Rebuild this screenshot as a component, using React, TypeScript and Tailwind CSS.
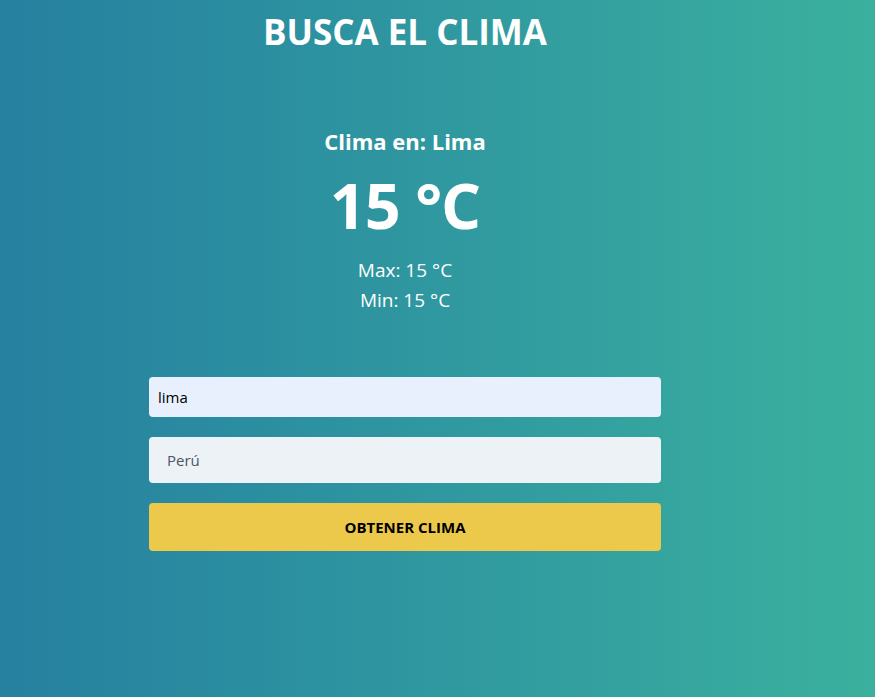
export default function App() {
  return (
    <div
      className="min-h-[697px] w-full bg-gradient-to-r from-[#2680a0] to-[#3bb09e] text-white"
      style={{ fontFamily: '"Open Sans", "Noto Sans", sans-serif' }}
    >
      <div className="ml-[149px] w-[512px] flex flex-col items-center">
        <h1 className="mt-[9px] text-[35px] leading-[46px] font-bold">BUSCA EL CLIMA</h1>

        <div className="mt-[71px] flex flex-col items-center">
          <h2 className="text-[22px] leading-[30px] font-bold">Clima en: Lima</h2>
          <p className="mt-[16px] text-[63px] leading-[66px] font-bold tracking-[-1px]">15 °C</p>
          <p className="mt-[17px] text-[19px] leading-[30px]">Max: 15 °C</p>
          <p className="text-[19px] leading-[30px]">Min: 15 °C</p>
        </div>

        <form className="mt-[62px] w-full flex flex-col">
          <input
            type="text"
            defaultValue="lima"
            className="h-[40px] w-full rounded bg-[#e8f0fe] px-[9px] text-[15px] text-black outline-none"
          />
          <input
            type="text"
            defaultValue="Perú"
            className="mt-[20px] h-[46px] w-full rounded bg-[#edf2f7] px-[18px] text-[15px] text-[#4a5568] outline-none"
          />
          <button
            type="button"
            className="mt-[20px] h-[48px] w-full rounded bg-[#ecc94b] text-[15px] font-bold uppercase text-black"
          >
            Obtener clima
          </button>
        </form>
      </div>
    </div>
  )
}
